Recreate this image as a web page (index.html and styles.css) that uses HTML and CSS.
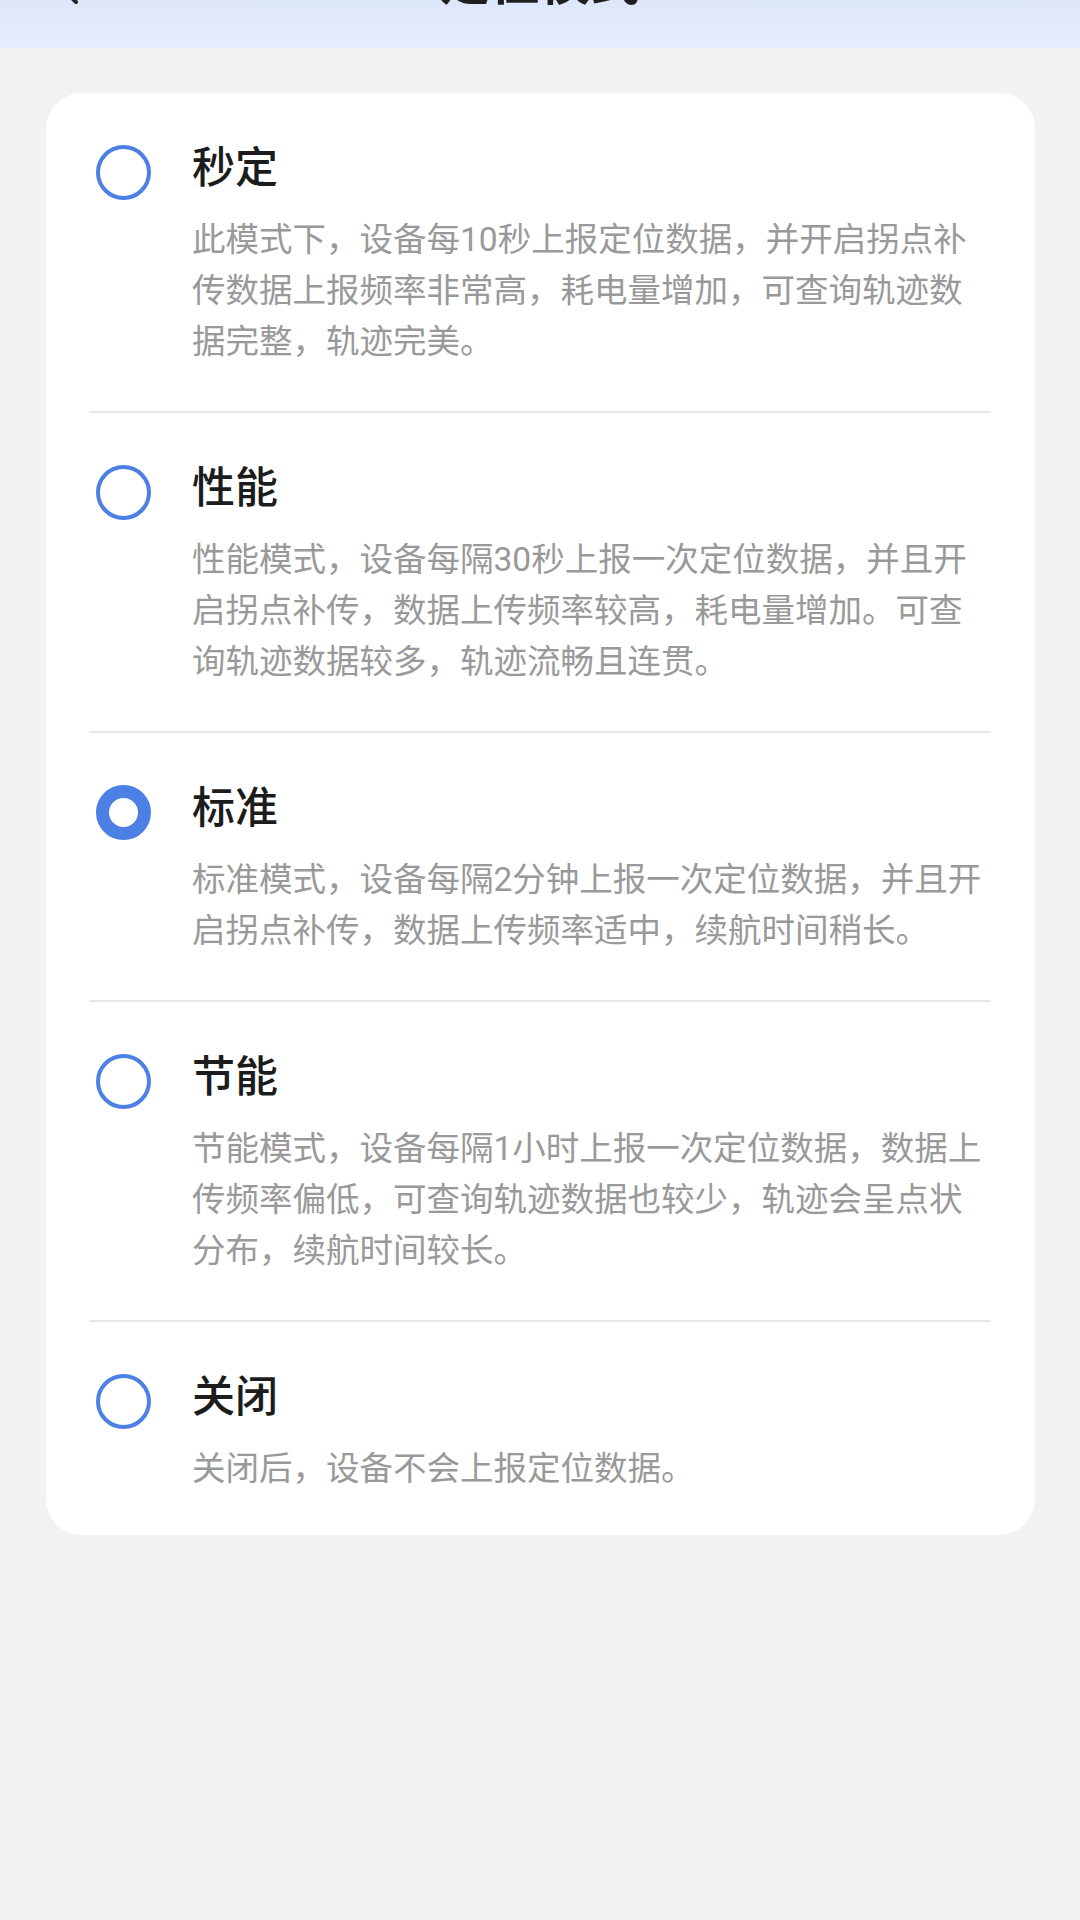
FILE: index.html
```html
<!DOCTYPE html>
<html lang="zh-CN">
<head>
    <meta charset="UTF-8">
    <meta name="viewport" content="width=device-width, initial-scale=1.0">
    <link rel="stylesheet" href="styles.css">
    <title>定位模式</title>
</head>
<body>
    <div class="topbar">
        <div class="topbar-inner">
            <div class="back-btn">
                <svg width="40" height="40" viewBox="0 0 40 40"><path d="M26 4 L10 20 L26 36" fill="none" stroke="#222" stroke-width="4" stroke-linecap="round" stroke-linejoin="round"/></svg>
            </div>
            <div class="page-title">定位模式</div>
            <div class="back-btn"></div>
        </div>
    </div>

    <div class="mode-card">
        <div class="mode-item">
            <div class="radio"></div>
            <div class="mode-text">
                <div class="mode-name">秒定</div>
                <div class="mode-desc">此模式下，设备每10秒上报定位数据，并开启拐点补<br>传数据上报频率非常高，耗电量增加，可查询轨迹数<br>据完整，轨迹完美。</div>
            </div>
        </div>
        <div class="mode-item">
            <div class="radio"></div>
            <div class="mode-text">
                <div class="mode-name">性能</div>
                <div class="mode-desc">性能模式，设备每隔30秒上报一次定位数据，并且开<br>启拐点补传，数据上传频率较高，耗电量增加。可查<br>询轨迹数据较多，轨迹流畅且连贯。</div>
            </div>
        </div>
        <div class="mode-item">
            <div class="radio checked"></div>
            <div class="mode-text">
                <div class="mode-name">标准</div>
                <div class="mode-desc">标准模式，设备每隔2分钟上报一次定位数据，并且开<br>启拐点补传，数据上传频率适中，续航时间稍长。</div>
            </div>
        </div>
        <div class="mode-item">
            <div class="radio"></div>
            <div class="mode-text">
                <div class="mode-name">节能</div>
                <div class="mode-desc">节能模式，设备每隔1小时上报一次定位数据，数据上<br>传频率偏低，可查询轨迹数据也较少，轨迹会呈点状<br>分布，续航时间较长。</div>
            </div>
        </div>
        <div class="mode-item">
            <div class="radio"></div>
            <div class="mode-text">
                <div class="mode-name">关闭</div>
                <div class="mode-desc">关闭后，设备不会上报定位数据。</div>
            </div>
        </div>
    </div>
</body>
</html>
```

FILE: styles.css
```css
body {
    margin: 0;
    padding: 0;
    background-color: #f2f2f2;
    font-family: Roboto, "Noto Sans CJK SC", sans-serif;
}

/* 顶部标题栏 (页面已向上滚动, 只露出底部) */
.topbar {
    height: 48px;
    overflow: hidden;
    background: linear-gradient(180deg, #dde7fa 0%, #e6eefd 100%);
}

.topbar-inner {
    height: 130px;
    margin-top: -82px;
    display: flex;
    align-items: center;
}

.back-btn {
    width: 100px;
    padding-left: 50px;
    box-sizing: border-box;
    display: flex;
    align-items: center;
}

.back-btn svg {
    display: block;
    margin-top: 6px;
}

.page-title {
    flex: 1;
    text-align: center;
    font-size: 50px;
    font-weight: bold;
    color: #1f1f1f;
    line-height: 60px;
}

/* 模式列表卡片 */
.mode-card {
    margin: 45px 45px 0 46px;
    padding: 0 44px 0 43px;
    background-color: #fff;
    border-radius: 36px;
}

.mode-item {
    display: flex;
    padding: 48px 0 44px 7px;
    border-bottom: 2px solid #e8e8e8;
}

.mode-item:last-child {
    border-bottom: none;
    padding-bottom: 41px;
}

.radio {
    width: 55px;
    height: 55px;
    box-sizing: border-box;
    border: 4px solid #4d80e4;
    border-radius: 50%;
    flex-shrink: 0;
    margin-top: 4px;
    margin-right: 41px;
}

.radio.checked {
    border: 13px solid #4d80e4;
}

.mode-name {
    font-size: 43px;
    font-weight: 500;
    color: #1c1c1c;
    line-height: 54px;
}

.mode-desc {
    margin-top: 19px;
    font-size: 33.5px;
    line-height: 51px;
    color: #999;
    white-space: nowrap;
}
```
